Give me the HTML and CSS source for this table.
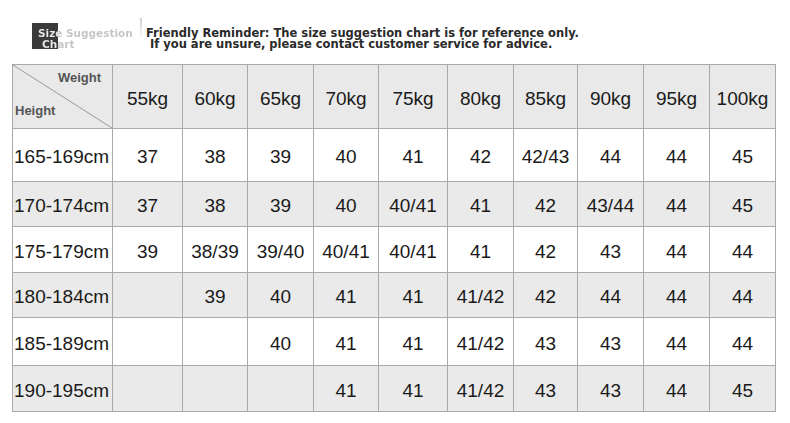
FILE: index.html
```html
<!DOCTYPE html>
<html>
<head>
<meta charset="utf-8">
<link rel="stylesheet" href="styles.css">
</head>
<body>
<div class="top">
  <div class="badge">
    <div class="badge-box"></div>
    <div class="badge-text"><span class="l1">Size Suggestion</span><br><span class="l2">Chart</span></div>
    <div class="tick"></div>
  </div>
  <div class="reminder">Friendly Reminder: The size suggestion chart is for reference only.<br><span class="l2">If you are unsure, please contact customer service for advice.</span></div>
</div>
<table class="chart">
  <colgroup>
    <col class="c0"><col class="c1"><col class="c2"><col class="c3"><col class="c4"><col class="c5"><col class="c6"><col class="c7"><col class="c8"><col class="c9"><col class="c10">
  </colgroup>
  <tr class="head">
    <th class="corner">
      <svg class="diag" viewBox="0 0 100 64" preserveAspectRatio="none"><line x1="0" y1="0" x2="100" y2="64" stroke="#9a9a9a" stroke-width="1" vector-effect="non-scaling-stroke"/></svg>
      <span class="w">Weight</span><span class="h">Height</span>
    </th>
    <th>55kg</th><th>60kg</th><th>65kg</th><th>70kg</th><th>75kg</th><th>80kg</th><th>85kg</th><th>90kg</th><th>95kg</th><th>100kg</th>
  </tr>
  <tr class="r1"><td class="hgt">165-169cm</td><td>37</td><td>38</td><td>39</td><td>40</td><td>41</td><td>42</td><td>42/43</td><td>44</td><td>44</td><td>45</td></tr>
  <tr class="r2 alt"><td class="hgt">170-174cm</td><td>37</td><td>38</td><td>39</td><td>40</td><td>40/41</td><td>41</td><td>42</td><td>43/44</td><td>44</td><td>45</td></tr>
  <tr class="r3"><td class="hgt">175-179cm</td><td>39</td><td>38/39</td><td>39/40</td><td>40/41</td><td>40/41</td><td>41</td><td>42</td><td>43</td><td>44</td><td>44</td></tr>
  <tr class="r4 alt"><td class="hgt">180-184cm</td><td></td><td>39</td><td>40</td><td>41</td><td>41</td><td>41/42</td><td>42</td><td>44</td><td>44</td><td>44</td></tr>
  <tr class="r5"><td class="hgt">185-189cm</td><td></td><td></td><td>40</td><td>41</td><td>41</td><td>41/42</td><td>43</td><td>43</td><td>44</td><td>44</td></tr>
  <tr class="r6 alt"><td class="hgt">190-195cm</td><td></td><td></td><td></td><td>41</td><td>41</td><td>41/42</td><td>43</td><td>43</td><td>44</td><td>45</td></tr>
</table>
</body>
</html>
```

FILE: styles.css
```css
html, body {
  margin: 0;
  padding: 0;
  background: #ffffff;
}

body {
  width: 790px;
  height: 423px;
  overflow: hidden;
  font-family: "Liberation Sans", Arial, sans-serif;
  color: #1a1a1a;
}

.top {
  display: flex;
  align-items: flex-start;
  height: 64px;
  padding-left: 32px;
  box-sizing: border-box;
  padding-top: 28px;
}

.badge {
  position: relative;
  width: 114px;
  height: 24px;
}

.badge-box {
  position: absolute;
  left: 0;
  top: -5px;
  width: 26px;
  height: 26px;
  background: #3a3a3a;
}

.badge-text {
  position: relative;
  font-family: "DejaVu Sans", Verdana, sans-serif;
  font-weight: bold;
  font-size: 10.5px;
  line-height: 11px;
  padding-left: 6px;
  white-space: nowrap;
}

.badge-text .l1 {
  background: linear-gradient(to right, #ececec 0, #ececec 20px, #c4c4c4 20px);
  -webkit-background-clip: text;
  background-clip: text;
  color: transparent;
}

.badge-text .l2 {
  margin-left: 4px;
  background: linear-gradient(to right, #ececec 0, #ececec 16px, #c4c4c4 16px);
  -webkit-background-clip: text;
  background-clip: text;
  color: transparent;
}

.tick {
  position: absolute;
  left: 108px;
  top: -10px;
  width: 2px;
  height: 22px;
  background: linear-gradient(#cfcfcf, rgba(255,255,255,0));
}

.reminder {
  font-family: "DejaVu Sans", Verdana, sans-serif;
  font-weight: bold;
  font-size: 11.5px;
  line-height: 11px;
  color: #2a2a2a;
  white-space: nowrap;
}

.reminder .l2 {
  padding-left: 4px;
}

.chart {
  margin-left: 12px;
  border-collapse: collapse;
  table-layout: fixed;
  width: 764px;
}

.c0 { width: 100px; }
.c1 { width: 70px; }
.c2 { width: 65px; }
.c3 { width: 66px; }
.c4 { width: 65px; }
.c5 { width: 69px; }
.c6 { width: 66px; }
.c7 { width: 64px; }
.c8 { width: 66px; }
.c9 { width: 66px; }
.c10 { width: 66px; }

.chart th, .chart td {
  border: 1px solid #a9a9a9;
  padding: 0;
  text-align: center;
  font-weight: normal;
  font-size: 19px;
  color: #1a1a1a;
  box-sizing: border-box;
}

.chart td {
  padding-top: 4px;
}

.head {
  background: #e9e9e9;
  height: 64px;
}

.head th {
  padding-top: 4px;
}

.r1 { height: 53px; }
.r2 { height: 45px; }
.r3 { height: 46px; }
.r4 { height: 45px; }
.r5 { height: 48px; }
.r6 { height: 46px; }

.alt {
  background: #eaeaea;
}

.chart td.hgt {
  text-align: left;
  padding-left: 1px;
  white-space: nowrap;
}

.corner {
  position: relative;
}

.head th.corner {
  padding: 0;
}

.diag {
  position: absolute;
  left: 0;
  top: 0;
  width: 100%;
  height: 100%;
}

.corner .w, .corner .h {
  position: absolute;
  font-size: 13px;
  font-weight: bold;
  color: #555555;
}

.corner .w {
  right: 11px;
  top: 5px;
}

.corner .h {
  left: 2px;
  top: 38px;
}
```
